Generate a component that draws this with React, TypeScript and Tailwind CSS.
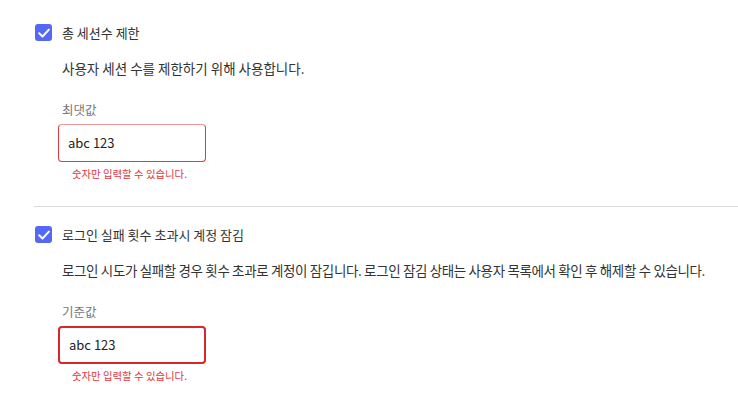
import * as React from "react";

const font = { fontFamily: '"Noto Sans CJK KR", "Noto Sans", sans-serif' };

interface SectionProps {
  title: string;
  description: string;
  label: string;
  value: string;
  focused?: boolean;
  tight?: boolean;
}

const CheckIcon = () => (
  <svg viewBox="0 0 16 16" className="h-[14px] w-[14px]" fill="none">
    <path d="M2.5 8.3 L6.3 12 L13.6 4.2" stroke="white" strokeWidth="2.3" strokeLinecap="round" strokeLinejoin="round" />
  </svg>
);

const Section = ({ title, description, label, value, focused, tight }: SectionProps) => (
  <div>
    <div className="flex h-[17px] items-center">
      <div className="ml-px flex h-[17px] w-[17px] items-center justify-center rounded-[3px] bg-[#5468f4]">
        <CheckIcon />
      </div>
      <span className="ml-[10px] text-[13px] leading-[20px] text-[#333]">{title}</span>
    </div>
    <p
      className={
        tight
          ? "mt-[17px] whitespace-nowrap pl-[28px] text-[13.5px] leading-[20px] tracking-[-0.36px] text-[#333]"
          : "mt-[17px] whitespace-nowrap pl-[28px] text-[13.5px] leading-[20px] text-[#333]"
      }
    >
      {description}
    </p>
    <div className="mt-[23px] pl-[28px] text-[12.5px] leading-[18px] text-[#777]">{label}</div>
    <div
      className={
        focused
          ? "ml-[24px] mt-[5px] flex h-[38px] w-[148px] items-center rounded-[4px] border-2 border-[#d9262b] px-[9px] text-[13px] text-[#222]"
          : "ml-[24px] mt-[5px] flex h-[38px] w-[148px] items-center rounded-[4px] border border-[#de3a3f] border-t-[#eb9597] px-[9px] text-[13px] text-[#222]"
      }
    >
      {value}
    </div>
    <div className="ml-[38px] mt-[4px] text-[10.4px] leading-[16px] text-[#e0393e]">숫자만 입력할 수 있습니다.</div>
  </div>
);

export default function App() {
  return (
    <div className="min-h-[406px] w-[738px] bg-white pl-[34px] pt-[24px]" style={font}>
      <Section
        title="총 세션수 제한"
        description="사용자 세션 수를 제한하기 위해 사용합니다."
        label="최댓값"
        value="abc 123"
      />
      <div className="mt-[24px] h-px bg-[#dddddd]" />
      <div className="mt-[19px]">
        <Section
          title="로그인 실패 횟수 초과시 계정 잠김"
          description="로그인 시도가 실패할 경우 횟수 초과로 계정이 잠깁니다. 로그인 잠김 상태는 사용자 목록에서 확인 후 해제할 수 있습니다."
          label="기준값"
          value="abc 123"
          focused
          tight
        />
      </div>
    </div>
  );
}
